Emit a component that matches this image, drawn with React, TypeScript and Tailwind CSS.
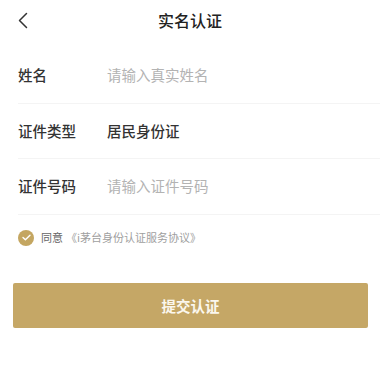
import React from "react";

const font = { fontFamily: '"Noto Sans CJK SC", "Noto Sans", sans-serif' };

export default function App() {
  const rows = [
    { label: "姓名", value: "请输入真实姓名", placeholder: true },
    { label: "证件类型", value: "居民身份证", placeholder: false },
    { label: "证件号码", value: "请输入证件号码", placeholder: true },
  ];

  return (
    <div className="w-[380px] h-[377px] bg-white" style={font}>
      {/* Header */}
      <div className="relative flex h-[40px] items-center justify-center">
        <svg className="absolute left-[17px] top-[12px]" width="12" height="17" viewBox="0 0 12 17" fill="none">
          <path d="M9.5 1.5L2.5 8.5L9.5 15.5" stroke="#333" strokeWidth="1.5" strokeLinecap="round" strokeLinejoin="round" />
        </svg>
        <span className="text-[16px] font-medium text-[#222]">实名认证</span>
      </div>

      {/* Form */}
      <div className="mt-[8px] pl-[18px]">
        {rows.map((row, i) => (
          <div key={i} className="flex h-[55.5px] items-center border-b border-[#f4f4f4]">
            <span className="w-[89px] text-[14.5px] font-medium text-[#333]">{row.label}</span>
            <span className={row.placeholder ? "text-[14.5px] text-[#b3b3b3]" : "text-[14.5px] font-medium text-[#333]"}>
              {row.value}
            </span>
          </div>
        ))}
      </div>

      {/* Agreement */}
      <div className="mt-[15px] flex h-[16px] items-center pl-[18px] leading-none">
        <span className="flex h-[16px] w-[16px] items-center justify-center rounded-full bg-[#c4a661]">
          <svg width="9" height="7" viewBox="0 0 9 7" fill="none">
            <path d="M1 3.5L3.4 5.8L8 1.2" stroke="#fff" strokeWidth="1.4" strokeLinecap="round" strokeLinejoin="round" />
          </svg>
        </span>
        <span className="ml-[7px] text-[11px] text-[#666]">同意</span>
        <span className="ml-[3px] text-[11px] text-[#a0a0a0]">《i茅台身份认证服务协议》</span>
      </div>

      {/* Submit */}
      <div className="mt-[37.5px] pl-[13px] pr-[12px]">
        <button className="flex h-[45px] w-full items-center justify-center rounded-[2px] bg-[#c5a766] text-[14.5px] font-bold text-[#fbf7ee]">
          提交认证
        </button>
      </div>
    </div>
  );
}
